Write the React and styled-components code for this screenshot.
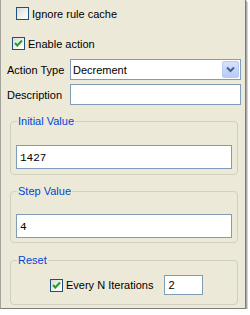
import React from 'react';
import styled, { createGlobalStyle } from 'styled-components';

const GlobalStyle = createGlobalStyle`
    body {
        margin: 0;
        background: #ffffff;
        font-family: "Liberation Sans", Arial, sans-serif;
        font-size: 11px;
    }
`;

function CheckBox({ checked }) {
    return (
        <Box>
            {checked ?
                <svg width="11" height="11" viewBox="0 0 11 11">
                    <path d="M2 5 L4.3 7.5 L9 2.5" fill="none" stroke="#21a121" strokeWidth="2" />
                </svg>
                : null}
        </Box>
    );
}

class App extends React.Component {
    render() {
        return (
            <Panel>
                <GlobalStyle />
                <CheckRow indent={16} top={7}>
                    <CheckBox />
                    <span>Ignore rule cache</span>
                </CheckRow>
                <CheckRow indent={12} top={17}>
                    <CheckBox checked />
                    <span>Enable action</span>
                </CheckRow>
                <FieldRow top={9}>
                    <Label>Action Type</Label>
                    <Select>
                        <span>Decrement</span>
                        <DropButton>
                            <svg width="9" height="7" viewBox="0 0 9 7">
                                <path d="M1 1.5 L4.5 5 L8 1.5" fill="none" stroke="#4d6185" strokeWidth="2" />
                            </svg>
                        </DropButton>
                    </Select>
                </FieldRow>
                <FieldRow top={4}>
                    <Label>Description</Label>
                    <TextBox />
                </FieldRow>
                <Group top={10} padTop={18} padBottom={5}>
                    <Legend>Initial Value</Legend>
                    <ValueBox>1427</ValueBox>
                </Group>
                <Group top={10} padTop={17} padBottom={4}>
                    <Legend>Step Value</Legend>
                    <ValueBox>4</ValueBox>
                </Group>
                <Group top={11} padTop={9} padBottom={9}>
                    <Legend>Reset</Legend>
                    <ResetRow>
                        <CheckBox checked />
                        <span>Every N Iterations</span>
                        <SmallBox>2</SmallBox>
                    </ResetRow>
                </Group>
            </Panel>
        );
    }
}

export default App;

const Panel = styled.div`
    box-sizing: border-box;
    width: 246px;
    height: 309px;
    background: #ece9d8;
    border-left: 1px solid #a5a49c;
    border-right: 1px solid #7d7d78;
    border-bottom: 1px solid #7d7d78;
    box-shadow: 1px 1px 0 #a8a8a8, 2px 2px 0 #d4d4d4;
    display: flex;
    flex-direction: column;
    color: #000000;
`;

const CheckRow = styled.div`
    display: flex;
    align-items: center;
    gap: 3px;
    height: 13px;
    margin-top: ${props => props.top}px;
    padding-left: ${props => props.indent - 1}px;
`;

const Box = styled.div`
    box-sizing: border-box;
    width: 13px;
    height: 13px;
    flex: none;
    border: 1px solid #1c5180;
    background: linear-gradient(135deg, #dcdcd7 0%, #f3f3ef 60%, #ffffff 100%);
    display: flex;
    align-items: center;
    justify-content: center;
`;

const FieldRow = styled.div`
    display: flex;
    align-items: center;
    height: 21px;
    margin-top: ${props => props.top}px;
    padding-left: 6px;
`;

const Label = styled.div`
    width: 63px;
`;

const Select = styled.div`
    box-sizing: border-box;
    width: 171px;
    height: 21px;
    border: 1px solid #7f9db9;
    background: #ffffff;
    display: flex;
    align-items: center;
    justify-content: space-between;
    padding-left: 2px;
`;

const DropButton = styled.div`
    box-sizing: border-box;
    width: 17px;
    height: 17px;
    margin-right: 1px;
    border: 1px solid #b9cbf3;
    border-radius: 2px;
    background: linear-gradient(180deg, #d6e2fd 0%, #b7cbf8 100%);
    display: flex;
    align-items: center;
    justify-content: center;
`;

const TextBox = styled.div`
    box-sizing: border-box;
    width: 171px;
    height: 21px;
    border: 1px solid #7f9db9;
    background: #ffffff;
`;

const Group = styled.fieldset`
    margin: ${props => props.top}px 7px 0 9px;
    padding: ${props => props.padTop}px 5px ${props => props.padBottom}px 5px;
    border: 1px solid #d0d0bf;
    border-radius: 4px;
    min-width: 0;
`;

const Legend = styled.legend`
    margin-left: 1px;
    padding: 0 1px;
    color: #0046d5;
`;

const ValueBox = styled.div`
    box-sizing: border-box;
    height: 24px;
    border: 1px solid #7f9db9;
    background: #ffffff;
    padding: 2px 0 0 3px;
    display: flex;
    align-items: center;
    font-family: "Liberation Mono", "Courier New", monospace;
    font-size: 11px;
`;

const ResetRow = styled.div`
    display: flex;
    align-items: center;
    gap: 3px;
    padding-left: 34px;
`;

const SmallBox = styled.div`
    box-sizing: border-box;
    width: 39px;
    height: 20px;
    margin-left: 8px;
    border: 1px solid #7f9db9;
    background: #ffffff;
    padding-left: 3px;
    display: flex;
    align-items: center;
`;
